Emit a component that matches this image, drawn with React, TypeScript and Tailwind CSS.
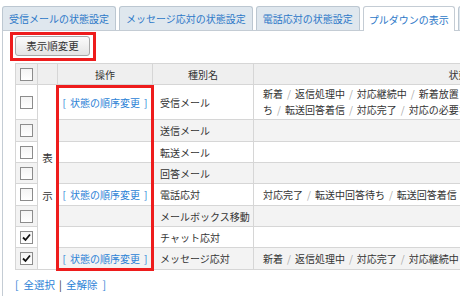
const tabs = [
  { label: "受信メールの状態設定", active: false },
  { label: "メッセージ応対の状態設定", active: false },
  { label: "電話応対の状態設定", active: false },
  { label: "プルダウンの表示", active: true },
  { label: "チャット", active: false },
];

type Row = {
  name: string;
  checked: boolean;
  link: boolean;
  status: string[];
  h: string;
};

const rows: Row[] = [
  {
    name: "受信メール",
    checked: false,
    link: true,
    status: ["新着", "返信処理中", "対応継続中", "新着放置", "転送中回答待ち", "転送回答着信", "対応完了", "対応の必要なし"],
    h: "h-[35px]",
  },
  { name: "送信メール", checked: false, link: false, status: [], h: "h-[22px]" },
  { name: "転送メール", checked: false, link: false, status: [], h: "h-[21px]" },
  { name: "回答メール", checked: false, link: false, status: [], h: "h-[21px]" },
  {
    name: "電話応対",
    checked: false,
    link: true,
    status: ["対応完了", "転送中回答待ち", "転送回答着信", "対応継続中"],
    h: "h-[22px]",
  },
  { name: "メールボックス移動", checked: false, link: false, status: [], h: "h-[21px]" },
  { name: "チャット応対", checked: true, link: false, status: [], h: "h-[21px]" },
  {
    name: "メッセージ応対",
    checked: true,
    link: true,
    status: ["新着", "返信処理中", "対応完了", "対応継続中", "新着放置"],
    h: "h-[22px]",
  },
];

function Box({ checked }: { checked: boolean }) {
  return (
    <span className="mx-auto flex h-[13px] w-[13px] items-center justify-center border border-[#8c8c8c] bg-gradient-to-b from-[#f4f4f4] to-white">
      {checked && (
        <svg width="9" height="9" viewBox="0 0 9 9">
          <path d="M1 4.5 L3.5 7 L8 1.5" fill="none" stroke="#111" strokeWidth="1.8" />
        </svg>
      )}
    </span>
  );
}

function Status({ items }: { items: string[] }) {
  return (
    <div className="max-w-[272px] leading-[16px]">
      {items.map((s, i) => (
        <span key={i}>
          {i > 0 && <span className="px-[4px] text-[#aaa]">/</span>}
          {s}
        </span>
      ))}
    </div>
  );
}

export default function App() {
  return (
    <div className="relative h-[296px] w-[460px] overflow-hidden bg-white font-['Noto_Sans_CJK_JP',sans-serif] text-[10px] text-[#333]">
      <div className="flex gap-[3px] pl-[2px] pt-[6px]">
        {tabs.map((t) => (
          <div
            key={t.label}
            className={
              t.active
                ? "relative z-10 -mb-px flex h-[25px] shrink-0 items-center whitespace-nowrap rounded-t-[3px] border border-b-0 border-[#c4ccd4] bg-white px-[5px] text-[#2c78c8]"
                : "flex h-[24px] shrink-0 items-center whitespace-nowrap rounded-t-[3px] border border-b-0 border-[#bcc7d1] bg-[#dfe7ee] px-[6px] text-[#2c78c8]"
            }
          >
            {t.label}
          </div>
        ))}
      </div>

      <div className="ml-[2px] h-full border-l border-t border-[#c4ccd4] pl-[12px]">
        <div className="relative mt-[5px] inline-block">
          <button className="flex h-[20px] w-[75px] items-center justify-center rounded-[3px] border border-[#a8a8a8] bg-gradient-to-b from-[#fbfbfb] to-[#e4e4e4] text-[10.5px] text-[#333]">
            表示順変更
          </button>
          <span className="absolute -bottom-[5px] -left-[5px] -right-[6px] -top-[4px] border-[3px] border-[#ee1c1c]" />
        </div>

        <div className="relative mt-[7px] w-[660px]">
          <table className="table-fixed border-collapse">
            <colgroup>
              <col className="w-[22px]" />
              <col className="w-[20px]" />
              <col className="w-[95px]" />
              <col className="w-[101px]" />
              <col className="w-[410px]" />
            </colgroup>
            <thead>
              <tr className="h-[21px] bg-[#efefef]">
                <th className="border border-[#d6d6d6] font-normal">
                  <Box checked={false} />
                </th>
                <th className="border border-[#d6d6d6] font-normal" />
                <th className="border border-[#d6d6d6] font-normal">操作</th>
                <th className="border border-[#d6d6d6] font-normal">種別名</th>
                <th className="border border-[#d6d6d6] font-normal">状態</th>
              </tr>
            </thead>
            <tbody>
              {rows.map((r, i) => (
                <tr key={r.name} className={`${r.h} ${i % 2 === 1 ? "bg-[#f3f3f3]" : "bg-white"}`}>
                  <td className="border border-[#d6d6d6]">
                    <Box checked={r.checked} />
                  </td>
                  {i === 0 && (
                    <td rowSpan={8} className="border border-[#d6d6d6] bg-white text-center text-[10.5px]">
                      <div className="flex flex-col items-center gap-[22px]">
                        <span>表</span>
                        <span>示</span>
                      </div>
                    </td>
                  )}
                  <td className="whitespace-nowrap border border-[#d6d6d6] text-center">
                    {r.link && (
                      <span className="text-[#2c82d6]">
                        [<span className="px-[4px]">状態の順序変更</span>]
                      </span>
                    )}
                  </td>
                  <td className="whitespace-nowrap border border-[#d6d6d6] pl-[7px]">{r.name}</td>
                  <td className="border border-[#d6d6d6] pl-[9px]">
                    <Status items={r.status} />
                  </td>
                </tr>
              ))}
            </tbody>
          </table>
          <span className="absolute left-[41px] top-[22px] h-[186px] w-[98px] border-[3px] border-[#ee1c1c]" />
        </div>

        <div className="mt-[7px] flex items-center text-[10.5px] text-[#2c82d6]">
          <span>[</span>
          <span className="pl-[5px]">全選択</span>
          <span className="px-[4px] text-[#333]">|</span>
          <span>全解除</span>
          <span className="pl-[5px]">]</span>
        </div>
      </div>
    </div>
  );
}
